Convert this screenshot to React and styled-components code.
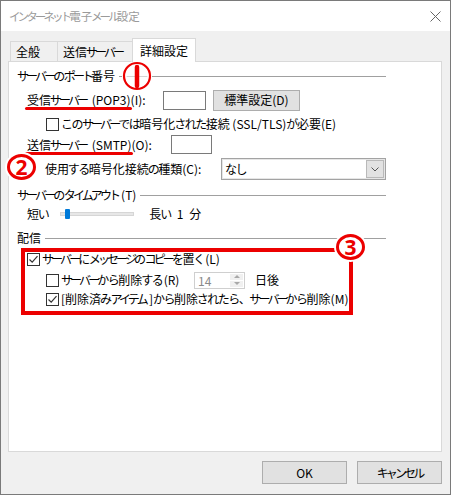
import React from 'react';
import styled, { createGlobalStyle } from 'styled-components';

const GlobalStyle = createGlobalStyle`
  html, body { margin: 0; padding: 0; background: #fff; }
  body {
    font-family: "Noto Sans CJK JP", "Noto Sans", sans-serif;
    font-size: 12px;
    color: #000;
  }
  * { box-sizing: border-box; }
`;

/* Yu Gothic UI has narrow kana; tighten kana runs of the fallback font */
const Kana = styled.span`
  letter-spacing: ${(p) => (p.$kata ? -2.9 : -1.5)}px;
  margin-left: ${(p) => (p.$afterKanji ? -1.2 : 0)}px;
`;

const RUNS = /([\u30A0-\u30FF]+|[\u3041-\u309F\u3001\u3002]+)/;
const KATA = /^[\u30A0-\u30FF]/;
const ASCII_START = /^[\x20-\x7E]/;
const KANJI_END = /[\u4E00-\u9FFF]$/;

function T({ children }) {
  const parts = String(children).split(RUNS);
  let before = '';
  return parts.map((s, i) => {
    const prev = before;
    before += s;
    if (i % 2 === 0) return <React.Fragment key={i}>{s}</React.Fragment>;
    const next = parts[i + 1] || '';
    const keepLast = ASCII_START.test(next);
    const kata = KATA.test(s);
    const afterKanji = KANJI_END.test(prev);
    if (!keepLast) {
      return (
        <Kana key={i} $kata={kata} $afterKanji={afterKanji}>
          {s}
        </Kana>
      );
    }
    return (
      <React.Fragment key={i}>
        <Kana $kata={kata} $afterKanji={afterKanji}>{s.slice(0, -1)}</Kana>
        {s.slice(-1)}
      </React.Fragment>
    );
  });
}

const Window = styled.div`
  width: 451px;
  height: 495px;
  border: 1px solid #7a7a7a;
  background: #f0f0f0;
  display: flex;
  flex-direction: column;
  line-height: 16px;
`;

const TitleBar = styled.div`
  height: 30px;
  flex-shrink: 0;
  background: #fff;
  display: flex;
  align-items: center;
  justify-content: space-between;
  padding: 0 9px 0 8px;
`;

const Title = styled.span`
  color: #9a9a9a;
  font-size: 11.5px;
`;

const Body = styled.div`
  flex: 1;
  display: flex;
  flex-direction: column;
  padding: 7px 8px 0 7px;
`;

const TabRow = styled.div`
  display: flex;
  align-items: flex-end;
  height: 23px;
  padding-left: 2px;
`;

const Tab = styled.div`
  width: ${(p) => p.$w}px;
  height: ${(p) => (p.$active ? 24 : 20)}px;
  margin-bottom: ${(p) => (p.$active ? -1 : 0)}px;
  margin-left: ${(p) => (p.$first ? 0 : -1)}px;
  border: 1px solid #d9d9d9;
  border-bottom: none;
  background: ${(p) => (p.$active ? '#fff' : '#f0f0f0')};
  padding-left: ${(p) => (p.$active ? 7 : 5)}px;
  display: flex;
  align-items: center;
  position: relative;
  z-index: ${(p) => (p.$active ? 2 : 0)};
  white-space: nowrap;
`;

const Panel = styled.div`
  height: 391px;
  background: #fff;
  border: 1px solid #d9d9d9;
  position: relative;
  z-index: 1;
  display: flex;
  flex-direction: column;
  padding: 0 55px 0 8px;
`;

const GroupHeader = styled.div`
  display: flex;
  align-items: center;
  height: 16px;
  margin-top: ${(p) => p.$top}px;
  white-space: nowrap;
`;

const GroupLine = styled.div`
  flex: 1;
  height: 1px;
  background: #a0a0a0;
  margin-left: 4px;
`;

const FieldRow = styled.div`
  display: flex;
  align-items: center;
  height: ${(p) => p.$h}px;
  margin-top: ${(p) => p.$top}px;
  padding-left: ${(p) => p.$indent}px;
  white-space: nowrap;
`;

const Label = styled.div`
  width: ${(p) => p.$w}px;
  flex-shrink: 0;
  display: flex;
  align-items: center;
`;

const Marked = styled.span`
  position: relative;
  display: inline-block;
  line-height: 16px;
  &::after {
    content: '';
    position: absolute;
    left: -2px;
    right: -1px;
    bottom: -2px;
    height: 3px;
    border-radius: 2px;
    background: #ec0000;
  }
`;

const TextInput = styled.div`
  width: ${(p) => p.$w}px;
  height: 19px;
  border: 1px solid #7a7a7a;
  background: #fff;
  flex-shrink: 0;
`;

const PushButton = styled.div`
  width: ${(p) => p.$w}px;
  height: ${(p) => p.$h}px;
  margin-left: ${(p) => p.$ml || 0}px;
  background: #e1e1e1;
  border: 1px solid #adadad;
  display: flex;
  align-items: center;
  justify-content: center;
  flex-shrink: 0;
`;

const Box = styled.span`
  width: 13px;
  height: 13px;
  border: 1px solid #333;
  background: #fff;
  display: inline-flex;
  align-items: center;
  justify-content: center;
  flex-shrink: 0;
  margin-right: 2px;
`;

const Check = ({ checked }) => (
  <Box>
    {checked && (
      <svg width="11" height="11" viewBox="0 0 11 11">
        <polyline points="1.5,5.5 4.2,8.2 9.5,2.2" fill="none" stroke="#333" strokeWidth="1.2" />
      </svg>
    )}
  </Box>
);

const Select = styled.div`
  width: 165px;
  height: 22px;
  border: 1px solid #a3a3a3;
  box-shadow: inset 0 0 0 1px #e6e6e6;
  background: #fff;
  display: flex;
  align-items: center;
  padding: 1px 1px 1px 3px;
  flex-shrink: 0;
`;

const SelectValue = styled.span`
  flex: 1;
`;

const SelectArrow = styled.span`
  width: 18px;
  height: 18px;
  background: #e2e2e2;
  border: 1px solid #b9b9b9;
  display: flex;
  align-items: center;
  justify-content: center;
`;

const SliderBox = styled.div`
  position: relative;
  width: 74px;
  height: 16px;
  margin-left: 12px;
  display: flex;
  align-items: center;
`;

const Track = styled.div`
  width: 100%;
  height: 4px;
  background: #e7e7e7;
  border: 1px solid #d6d6d6;
`;

const Thumb = styled.div`
  position: absolute;
  left: 5px;
  top: 3px;
  width: 5px;
  height: 10px;
  background: #007ad9;
  border-radius: 1px;
`;

const Plain = styled.span`
  margin-left: ${(p) => p.$ml}px;
`;

const RedBox = styled.div`
  width: 332px;
  height: 67px;
  margin-top: 2px;
  margin-left: 4px;
  border: 4px solid #ec0000;
  display: flex;
  flex-direction: column;
`;

const Spin = styled.div`
  width: 51px;
  height: 17px;
  border: 1px solid #cfcfcf;
  background: #fff;
  display: flex;
  flex-shrink: 0;
`;

const SpinValue = styled.span`
  flex: 1;
  color: #8a8a8a;
  padding-left: 3px;
  line-height: 15px;
`;

const SpinButtons = styled.div`
  width: 13px;
  margin: 1px 1px 1px 0;
  display: flex;
  flex-direction: column;
  gap: 1px;
`;

const SpinBtn = styled.div`
  flex: 1;
  background: #f0f0f0;
  display: flex;
  align-items: center;
  justify-content: center;
  &::before {
    content: '';
    border-left: 3px solid transparent;
    border-right: 3px solid transparent;
    ${(p) => (p.$up ? 'border-bottom: 3px solid #a8a8a8;' : 'border-top: 3px solid #a8a8a8;')}
  }
`;

const Footer = styled.div`
  display: flex;
  justify-content: flex-end;
  gap: 10px;
  padding-top: 9px;
`;

const CircleMark = styled.div`
  position: absolute;
  left: ${(p) => p.$x}px;
  top: ${(p) => p.$y}px;
  width: 29px;
  height: 26px;
  border: 3px solid #ec0000;
  border-radius: 50%;
  background: #fff;
  box-shadow: 0 0 0 2px #fff;
  color: #ec0000;
  font-family: "Noto Sans", "Liberation Sans", sans-serif;
  font-weight: 700;
  font-size: 21px;
  line-height: 20px;
  display: flex;
  align-items: center;
  justify-content: center;
  z-index: 3;
`;

const MarkOne = styled.svg`
  position: absolute;
  left: ${(p) => p.$x}px;
  top: ${(p) => p.$y}px;
  z-index: 3;
`;

export default function App() {
  return (
    <>
      <GlobalStyle />
      <Window>
        <TitleBar>
          <Title><T>インターネット電子メール設定</T></Title>
          <svg width="11" height="11" viewBox="0 0 11 11">
            <path d="M0.5 0.5L10.5 10.5M10.5 0.5L0.5 10.5" stroke="#666" strokeWidth="1" />
          </svg>
        </TitleBar>
        <Body>
          <TabRow>
            <Tab $w={48} $first>全般</Tab>
            <Tab $w={76}><T>送信サーバー</T></Tab>
            <Tab $w={64} $active>詳細設定</Tab>
          </TabRow>
          <Panel>
            <MarkOne $x={113} $y={-1} width="30" height="30" viewBox="0 0 30 30">
              <circle cx="15" cy="15" r="13" fill="rgba(255,255,255,0.55)" stroke="#fff" strokeWidth="5" />
              <circle cx="15" cy="15" r="13" fill="none" stroke="#ec0000" strokeWidth="2.2" />
              <line x1="15" y1="6" x2="15" y2="25" stroke="#ec0000" strokeWidth="4.5" strokeLinecap="round" />
            </MarkOne>
            <CircleMark $x={-2} $y={92}>2</CircleMark>
            <CircleMark $x={327} $y={172}>3</CircleMark>

            <GroupHeader $top={6}>
              <T>サーバーのポート番号</T>
              <GroupLine />
            </GroupHeader>

            <FieldRow $h={20} $top={6} $indent={10}>
              <Label $w={136}>
                <Marked><T>受信サーバー (POP3)</T></Marked>(I):
              </Label>
              <TextInput $w={43} />
              <PushButton $w={87} $h={21} $ml={7}>標準設定(D)</PushButton>
            </FieldRow>

            <FieldRow $h={16} $top={6} $indent={29}>
              <Check />
              <T>このサーバーでは暗号化された接続 (SSL/TLS) が必要(E)</T>
            </FieldRow>

            <FieldRow $h={19} $top={3} $indent={10}>
              <Label $w={144}>
                <Marked><T>送信サーバー (SMTP)</T></Marked>(O):
              </Label>
              <TextInput $w={41} />
            </FieldRow>

            <FieldRow $h={22} $top={4} $indent={28}>
              <Label $w={176}><T>使用する暗号化接続の種類(C):</T></Label>
              <Select>
                <SelectValue><T>なし</T></SelectValue>
                <SelectArrow>
                  <svg width="8" height="5" viewBox="0 0 8 5">
                    <polyline points="0.5,0.5 4,4 7.5,0.5" fill="none" stroke="#555" strokeWidth="1" />
                  </svg>
                </SelectArrow>
              </Select>
            </FieldRow>

            <GroupHeader $top={7}>
              <T>サーバーのタイムアウト(T)</T>
              <GroupLine />
            </GroupHeader>

            <FieldRow $h={16} $top={3} $indent={10}>
              <span><T>短い</T></span>
              <SliderBox>
                <Track />
                <Thumb />
              </SliderBox>
              <Plain $ml={15}><T>長い</T></Plain>
              <Plain $ml={6}>1</Plain>
              <Plain $ml={6}>分</Plain>
            </FieldRow>

            <GroupHeader $top={8}>
              配信
              <GroupLine />
            </GroupHeader>

            <RedBox>
              <FieldRow $h={14} $top={0} $indent={2}>
                <Check checked />
                <T>サーバーにメッセージのコピーを置く(L)</T>
              </FieldRow>
              <FieldRow $h={16} $top={6} $indent={21}>
                <Label $w={148}>
                  <Check />
                  <T>サーバーから削除する(R)</T>
                </Label>
                <Spin>
                  <SpinValue>14</SpinValue>
                  <SpinButtons>
                    <SpinBtn $up />
                    <SpinBtn />
                  </SpinButtons>
                </Spin>
                <Plain $ml={10}>日後</Plain>
              </FieldRow>
              <FieldRow $h={16} $top={3} $indent={21}>
                <Check checked />
                <T>[削除済みアイテム] から削除されたら、サーバーから削除(M)</T>
              </FieldRow>
            </RedBox>
          </Panel>
          <Footer>
            <PushButton $w={85} $h={23}>OK</PushButton>
            <PushButton $w={85} $h={23}><T>キャンセル</T></PushButton>
          </Footer>
        </Body>
      </Window>
    </>
  );
}
